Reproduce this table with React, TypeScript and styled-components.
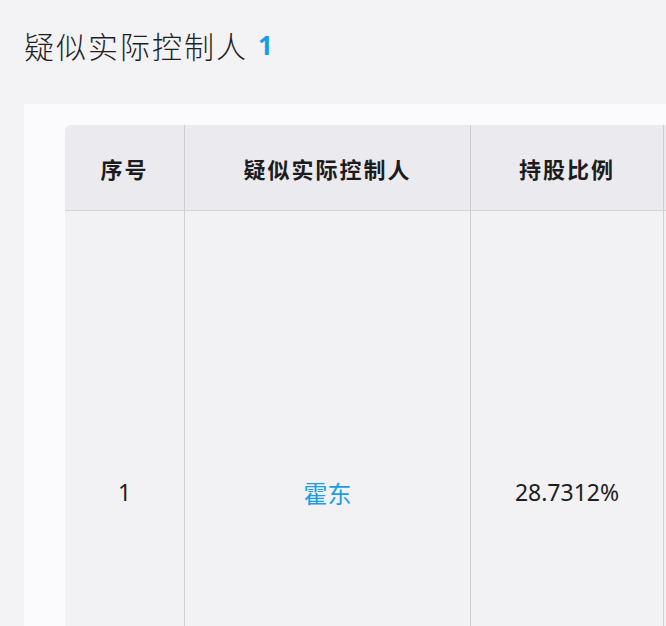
import styled, { createGlobalStyle } from "styled-components";

const GlobalStyle = createGlobalStyle`
  html, body {
    margin: 0;
    padding: 0;
    background: #f3f2f5;
    overflow: hidden;
  }
  body {
    font-family: "Noto Sans", "Noto Sans CJK SC", sans-serif;
    color: #222;
  }
`;

const Page = styled.div`
  width: 666px;
  height: 626px;
  overflow: hidden;
  padding: 27px 0 0 24px;
  box-sizing: border-box;
`;

const Title = styled.h1`
  margin: 0;
  font-family: "Noto Sans CJK SC", sans-serif;
  font-size: 30px;
  line-height: 36px;
  font-weight: 300;
  letter-spacing: 2px;
  color: #1f1f1f;
  display: flex;
  align-items: center;
  gap: 10px;
`;

const Count = styled.span`
  font-family: "Noto Sans", sans-serif;
  font-weight: 700;
  font-size: 26px;
  color: #1b9be6;
  letter-spacing: 0;
`;

const Card = styled.section`
  margin-top: 41px;
  background: #fbfbfd;
  padding: 21px 0 0 41px;
  height: 600px;
`;

const Table = styled.table`
  border-collapse: separate;
  border-spacing: 0;
  table-layout: fixed;
  width: 800px;
`;

const HeadCell = styled.th<{ $w: number; $first?: boolean }>`
  width: ${(p) => p.$w}px;
  height: 86px;
  padding: 0;
  box-sizing: border-box;
  background: #ebeaef;
  border-right: 1px solid #cfced3;
  border-bottom: 1px solid #d3d2d7;
  border-top-left-radius: ${(p) => (p.$first ? "6px" : "0")};
  font-family: "Noto Sans CJK SC", sans-serif;
  font-size: 22px;
  font-weight: 700;
  letter-spacing: 2px;
  color: #1c1c1c;
  text-align: center;
  vertical-align: middle;
`;

const Cell = styled.td<{ $link?: boolean }>`
  height: 562px;
  padding: 0;
  background: #f2f1f4;
  border-right: 1px solid #cfced3;
  text-align: center;
  vertical-align: middle;
  font-family: ${(p) =>
    p.$link ? `"Noto Sans CJK SC", sans-serif` : `"Noto Sans", "Noto Sans CJK SC", sans-serif`};
  font-size: ${(p) => (p.$link ? "24px" : "23px")};
  font-weight: 400;
  color: ${(p) => (p.$link ? "#1a9de8" : "#1e1e1e")};
`;

const columns = [
  { key: "no", title: "序号", width: 120 },
  { key: "name", title: "疑似实际控制人", width: 286 },
  { key: "ratio", title: "持股比例", width: 193 },
  { key: "more", title: "", width: 201 },
];

const rows = [{ no: "1", name: "霍东", ratio: "28.7312%" }];

export default function App() {
  return (
    <>
      <GlobalStyle />
      <Page>
        <Title>
          疑似实际控制人
          <Count>1</Count>
        </Title>
        <Card>
          <Table>
            <thead>
              <tr>
                {columns.map((c, i) => (
                  <HeadCell key={c.key} $w={c.width} $first={i === 0}>
                    {c.title}
                  </HeadCell>
                ))}
              </tr>
            </thead>
            <tbody>
              {rows.map((r) => (
                <tr key={r.no}>
                  <Cell>{r.no}</Cell>
                  <Cell $link>{r.name}</Cell>
                  <Cell>{r.ratio}</Cell>
                  <Cell />
                </tr>
              ))}
            </tbody>
          </Table>
        </Card>
      </Page>
    </>
  );
}
